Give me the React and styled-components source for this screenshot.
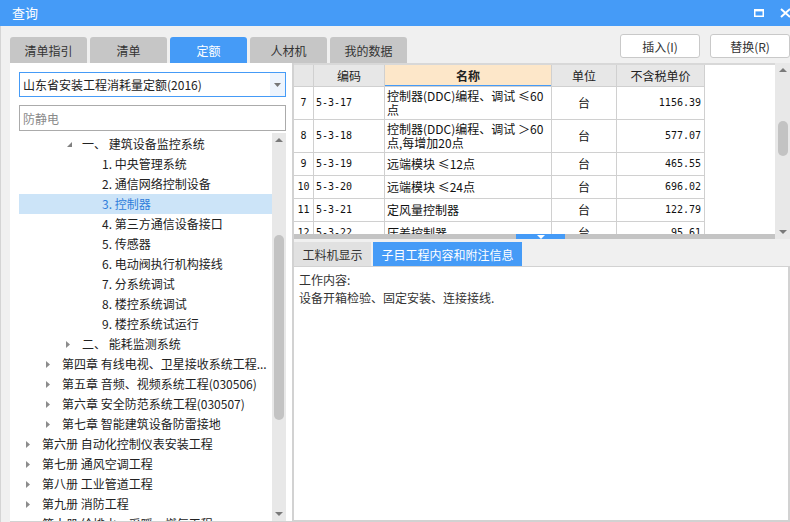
import React from "react";
import styled, { createGlobalStyle } from "styled-components";

const BLUE = "#459bf7";
const UI_FONT = `"Noto Sans CJK SC", "Noto Sans", sans-serif`;
const MONO_FONT = `"DejaVu Sans Mono", "Liberation Mono", "Noto Sans CJK SC", monospace`;

const GlobalStyle = createGlobalStyle`
  html, body {
    margin: 0;
    padding: 0;
    overflow: hidden;
    background: #f0f0f0;
  }
  * {
    box-sizing: border-box;
  }
`;

const Window = styled.div`
  width: 790px;
  height: 522px;
  display: flex;
  flex-direction: column;
  overflow: hidden;
  font-family: ${UI_FONT};
  font-size: 12px;
  color: #222;
  background: #f0f0f0;
`;

const TitleBar = styled.div`
  height: 26px;
  flex: none;
  display: flex;
  align-items: center;
  justify-content: space-between;
  padding-left: 12px;
  background: ${BLUE};
  color: #fff;
  font-size: 13px;
  line-height: 26px;
`;

const WindowControls = styled.div`
  display: flex;
  align-items: center;
  gap: 16px;
  margin-right: -1px;

  svg {
    display: block;
  }
`;

const Body = styled.div`
  flex: 1;
  min-height: 0;
  display: flex;
  flex-direction: column;
  padding-left: 9px;
  border-left: 1px solid #d4d4d4;
`;

const TopRow = styled.div`
  height: 37px;
  flex: none;
  display: flex;
  align-items: flex-end;
`;

const Tabs = styled.div`
  display: flex;
  gap: 3px;
`;

const Tab = styled.div`
  width: 77px;
  height: 26px;
  display: flex;
  align-items: center;
  justify-content: center;
  border-radius: 3px 3px 0 0;
  background: ${(p) => (p.$active ? BLUE : "#c6c6c6")};
  color: ${(p) => (p.$active ? "#fff" : "#333")};
  font-size: 12px;
`;

const Actions = styled.div`
  margin-left: auto;
  align-self: flex-start;
  margin-top: 8px;
  display: flex;
  gap: 10px;
`;

const Button = styled.button`
  width: 80px;
  height: 24px;
  padding: 0;
  background: #fff;
  border: 1px solid #c9c9c9;
  border-radius: 3px;
  font-family: ${UI_FONT};
  font-size: 12px;
  color: #333;
`;

const Main = styled.div`
  flex: 1;
  min-height: 0;
  display: flex;
`;

const LeftPanel = styled.div`
  width: 282px;
  flex: none;
  display: flex;
  flex-direction: column;
  padding: 9px 6px 0 9px;
  background: #fff;
  border-bottom: 1px solid #d2d2d2;
`;

const Dropdown = styled.div`
  height: 25px;
  flex: none;
  display: flex;
  border: 1px solid ${BLUE};
  background: #fff;
`;

const DropdownText = styled.div`
  flex: 1;
  display: flex;
  align-items: center;
  padding-left: 3px;
  font-size: 12px;
  color: #222;
`;

const DropdownArrow = styled.div`
  width: 15px;
  display: flex;
  align-items: center;
  justify-content: center;
  background: #edf4fd;
`;

const Search = styled.input`
  height: 26px;
  flex: none;
  margin-top: 8px;
  padding: 0 3px;
  border: 1px solid #ababab;
  outline: none;
  font-family: ${UI_FONT};
  font-size: 12px;
  color: #222;

  &::placeholder {
    color: #8a8a8a;
  }
`;

const TreeArea = styled.div`
  flex: 1;
  min-height: 0;
  margin-top: 2px;
  display: flex;
  overflow: hidden;
`;

const TreeList = styled.div`
  flex: 1;
  min-width: 0;
  padding-top: 1px;
  overflow: hidden;
`;

const TreeRow = styled.div`
  height: 20px;
  display: flex;
  align-items: center;
  padding-left: ${(p) => 4 + p.$level * 20}px;
  background: ${(p) => (p.$selected ? "#cce4f8" : "transparent")};
  color: ${(p) => (p.$selected ? "#2f7edb" : "#222")};
  white-space: nowrap;
  line-height: 20px;
`;

const TreeToggle = styled.span`
  width: 19px;
  flex: none;
  display: flex;
  align-items: center;
  padding-left: ${(p) => (p.$open ? 4 : 3)}px;

  svg {
    display: block;
  }
`;

const Scrollbar = styled.div`
  width: ${(p) => p.$width}px;
  flex: none;
  display: flex;
  flex-direction: column;
  align-items: center;
  background: #e8e8e8;
`;

const ScrollArrow = styled.div`
  height: 14px;
  width: 100%;
  flex: none;
  display: flex;
  align-items: center;
  justify-content: center;

  svg {
    display: block;
  }
`;

const ScrollTrack = styled.div`
  flex: 1;
  width: 100%;
  display: flex;
  justify-content: center;
`;

const ScrollThumb = styled.div`
  width: 10px;
  margin-top: ${(p) => p.$top}px;
  height: ${(p) => p.$size}px;
  border-radius: 5px;
  background: #c3c3c3;
`;

const RightPanel = styled.div`
  flex: 1;
  min-width: 0;
  display: flex;
  flex-direction: column;
  border-left: 2px solid #d2d2d2;
`;

const TopArea = styled.div`
  height: 176px;
  flex: none;
  display: flex;
`;

const TableColumn = styled.div`
  flex: 1;
  min-width: 0;
  display: flex;
  flex-direction: column;
`;

const TableBox = styled.div`
  height: 171px;
  flex: none;
  overflow: hidden;
  background: #fff;
  border-top: 2px solid #d8d8d8;
`;

const Grid = styled.table`
  width: 411px;
  table-layout: fixed;
  border-collapse: separate;
  border-spacing: 0;
`;

const HeadCell = styled.th`
  height: 22px;
  padding: 0;
  border-right: 1px solid #d0d0d0;
  border-bottom: 1px solid #d0d0d0;
  background: ${(p) => (p.$accent ? "#fde7c9" : "#e7e7e7")};
  box-shadow: ${(p) => (p.$accent ? `inset 0 -1px 0 ${BLUE}` : "none")};
  font-family: ${UI_FONT};
  font-size: 12px;
  font-weight: ${(p) => (p.$accent ? 700 : 400)};
  color: #222;
  text-align: center;
  line-height: 14px;
`;

const Cell = styled.td`
  height: ${(p) => p.$h}px;
  padding: ${(p) => (p.$align === "right" ? "0 3px 0 0" : p.$align === "left" ? "0 0 0 2px" : "0")};
  border-right: 1px solid #d0d0d0;
  border-bottom: 1px solid #d0d0d0;
  font-family: ${(p) => (p.$mono ? MONO_FONT : UI_FONT)};
  font-size: ${(p) => (p.$mono ? 10 : 12)}px;
  color: #111;
  text-align: ${(p) => p.$align || "center"};
  vertical-align: middle;
  white-space: nowrap;
  line-height: 14px;
  overflow: hidden;
`;

const Splitter = styled.div`
  height: 5px;
  flex: none;
  background: #c4c4c4;
  display: flex;
`;

const SplitHandle = styled.div`
  width: 49px;
  margin-left: 222px;
  display: flex;
  align-items: center;
  justify-content: center;
  background: ${BLUE};

  svg {
    display: block;
  }
`;

const SubTabs = styled.div`
  height: 27px;
  flex: none;
  display: flex;
  align-items: flex-end;
  gap: 2px;
`;

const SubTab = styled.div`
  width: ${(p) => p.$w}px;
  height: 24px;
  display: flex;
  align-items: center;
  justify-content: center;
  background: ${(p) => (p.$active ? BLUE : "#e1e1e1")};
  color: ${(p) => (p.$active ? "#fff" : "#333")};
  font-size: 12px;
`;

const InfoBox = styled.div`
  flex: 1;
  min-height: 0;
  padding: 4px 5px;
  background: #fff;
  border-top: 1px solid #d2d2d2;
  border-right: 2px solid #d2d2d2;
  border-bottom: 2px solid #d2d2d2;
  font-size: 12px;
  line-height: 18px;
  color: #333;
`;

const tabs = ["清单指引", "清单", "定额", "人材机", "我的数据"];

const tree = [
  { level: 2, toggle: "open", text: "一、 建筑设备监控系统" },
  { level: 3, text: "1. 中央管理系统" },
  { level: 3, text: "2. 通信网络控制设备" },
  { level: 3, text: "3. 控制器", selected: true },
  { level: 3, text: "4. 第三方通信设备接口" },
  { level: 3, text: "5. 传感器" },
  { level: 3, text: "6. 电动阀执行机构接线" },
  { level: 3, text: "7. 分系统调试" },
  { level: 3, text: "8. 楼控系统调试" },
  { level: 3, text: "9. 楼控系统试运行" },
  { level: 2, toggle: "closed", text: "二、 能耗监测系统" },
  { level: 1, toggle: "closed", text: "第四章 有线电视、卫星接收系统工程..." },
  { level: 1, toggle: "closed", text: "第五章 音频、视频系统工程(030506)" },
  { level: 1, toggle: "closed", text: "第六章 安全防范系统工程(030507)" },
  { level: 1, toggle: "closed", text: "第七章 智能建筑设备防雷接地" },
  { level: 0, toggle: "closed", text: "第六册 自动化控制仪表安装工程" },
  { level: 0, toggle: "closed", text: "第七册 通风空调工程" },
  { level: 0, toggle: "closed", text: "第八册 工业管道工程" },
  { level: 0, toggle: "closed", text: "第九册 消防工程" },
  { level: 0, toggle: "closed", text: "第十册 给排水、采暖、燃气工程" },
];

const rows = [
  { no: 7, code: "5-3-17", name: ["控制器(DDC)编程、调试 ≤60", "点"], unit: "台", price: "1156.39", h: 33 },
  { no: 8, code: "5-3-18", name: ["控制器(DDC)编程、调试 ＞60", "点,每增加20点"], unit: "台", price: "577.07", h: 33 },
  { no: 9, code: "5-3-19", name: ["远端模块 ≤12点"], unit: "台", price: "465.55", h: 23 },
  { no: 10, code: "5-3-20", name: ["远端模块 ≤24点"], unit: "台", price: "696.02", h: 23 },
  { no: 11, code: "5-3-21", name: ["定风量控制器"], unit: "台", price: "122.79", h: 23 },
  { no: 12, code: "5-3-22", name: ["压差控制器"], unit: "台", price: "95.61", h: 23 },
];

const Toggle = ({ kind }) => {
  if (kind === "open") {
    return (
      <TreeToggle $open>
        <svg width="5" height="5" viewBox="0 0 5 5">
          <polygon points="5,0 5,5 0,5" fill="#808080" />
        </svg>
      </TreeToggle>
    );
  }
  if (kind === "closed") {
    return (
      <TreeToggle>
        <svg width="4" height="7" viewBox="0 0 4 7">
          <polygon points="0,0 4,3.5 0,7" fill="#8c8c8c" />
        </svg>
      </TreeToggle>
    );
  }
  return <TreeToggle />;
};

const Up = () => (
  <svg width="8" height="4" viewBox="0 0 8 4">
    <polygon points="0,4 4,0 8,4" fill="#7a7a7a" />
  </svg>
);

const Down = ({ color = "#7a7a7a" }) => (
  <svg width="8" height="4" viewBox="0 0 8 4">
    <polygon points="0,0 8,0 4,4" fill={color} />
  </svg>
);

export default function App() {
  return (
    <>
      <GlobalStyle />
      <Window>
        <TitleBar>
          <span>查询</span>
          <WindowControls>
            <svg width="10" height="8" viewBox="0 0 10 8">
              <rect x="0.75" y="0.75" width="8.5" height="6.5" fill="none" stroke="#fff" strokeWidth="1.5" />
              <rect x="0" y="0" width="10" height="2.4" fill="#fff" />
            </svg>
            <svg width="11" height="10" viewBox="0 0 11 10">
              <path d="M1 1 L10 9 M10 1 L1 9" stroke="#fff" strokeWidth="2" />
            </svg>
          </WindowControls>
        </TitleBar>

        <Body>
          <TopRow>
            <Tabs>
              {tabs.map((t) => (
                <Tab key={t} $active={t === "定额"}>{t}</Tab>
              ))}
            </Tabs>
            <Actions>
              <Button>插入(I)</Button>
              <Button>替换(R)</Button>
            </Actions>
          </TopRow>

          <Main>
            <LeftPanel>
              <Dropdown>
                <DropdownText>山东省安装工程消耗量定额(2016)</DropdownText>
                <DropdownArrow>
                  <svg width="7" height="4" viewBox="0 0 7 4">
                    <polygon points="0,0 7,0 3.5,4" fill="#777" />
                  </svg>
                </DropdownArrow>
              </Dropdown>
              <Search placeholder="防静电" readOnly />
              <TreeArea>
                <TreeList>
                  {tree.map((n, i) => (
                    <TreeRow key={i} $level={n.level} $selected={n.selected}>
                      <Toggle kind={n.toggle} />
                      <span>{n.text}</span>
                    </TreeRow>
                  ))}
                </TreeList>
                <Scrollbar $width={14}>
                  <ScrollArrow><Up /></ScrollArrow>
                  <ScrollTrack>
                    <ScrollThumb $top={88} $size={185} />
                  </ScrollTrack>
                  <ScrollArrow><Down /></ScrollArrow>
                </Scrollbar>
              </TreeArea>
            </LeftPanel>

            <RightPanel>
              <TopArea>
                <TableColumn>
                  <TableBox>
                    <Grid>
                      <colgroup>
                        <col style={{ width: 20 }} />
                        <col style={{ width: 71 }} />
                        <col style={{ width: 167 }} />
                        <col style={{ width: 65 }} />
                        <col style={{ width: 88 }} />
                      </colgroup>
                      <thead>
                        <tr>
                          <HeadCell />
                          <HeadCell>编码</HeadCell>
                          <HeadCell $accent>名称</HeadCell>
                          <HeadCell>单位</HeadCell>
                          <HeadCell>不含税单价</HeadCell>
                        </tr>
                      </thead>
                      <tbody>
                        {rows.map((r) => (
                          <tr key={r.no}>
                            <Cell $h={r.h} $mono>{r.no}</Cell>
                            <Cell $h={r.h} $mono $align="left">{r.code}</Cell>
                            <Cell $h={r.h} $align="left">
                              {r.name.map((line, i) => (
                                <div key={i}>{line}</div>
                              ))}
                            </Cell>
                            <Cell $h={r.h}>{r.unit}</Cell>
                            <Cell $h={r.h} $mono $align="right">{r.price}</Cell>
                          </tr>
                        ))}
                      </tbody>
                    </Grid>
                  </TableBox>
                  <Splitter>
                    <SplitHandle><Down color="#fff" /></SplitHandle>
                  </Splitter>
                </TableColumn>
                <Scrollbar $width={15}>
                  <ScrollArrow><Up /></ScrollArrow>
                  <ScrollTrack>
                    <ScrollThumb $top={44} $size={35} />
                  </ScrollTrack>
                  <ScrollArrow><Down /></ScrollArrow>
                </Scrollbar>
              </TopArea>

              <SubTabs>
                <SubTab $w={77}>工料机显示</SubTab>
                <SubTab $w={149} $active>子目工程内容和附注信息</SubTab>
              </SubTabs>
              <InfoBox>
                <div>工作内容:</div>
                <div>设备开箱检验、固定安装、连接接线.</div>
              </InfoBox>
            </RightPanel>
          </Main>
        </Body>
      </Window>
    </>
  );
}
